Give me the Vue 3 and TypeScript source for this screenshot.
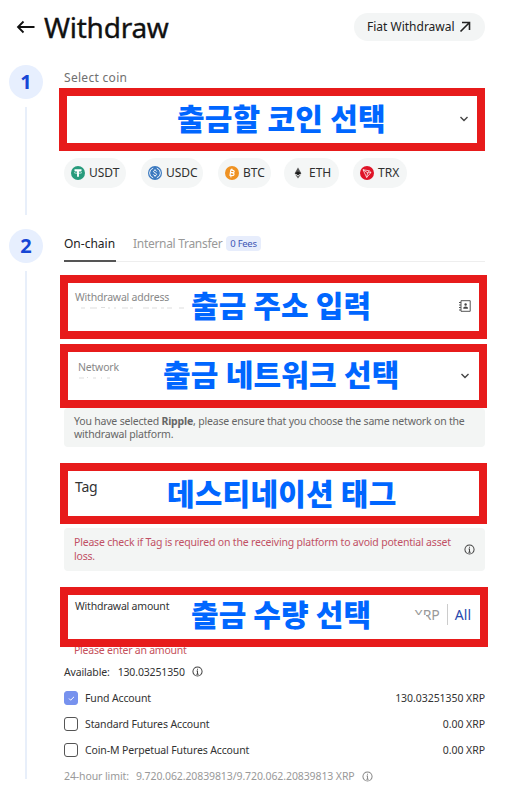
<script setup lang="ts">
interface Coin { id: string; gap: number; width: number }
interface Account { name: string; amount: string; checked: boolean; cls: string }

const coins: Coin[] = [
  { id: 'USDT', gap: 0, width: 62 },
  { id: 'USDC', gap: 15, width: 62 },
  { id: 'BTC', gap: 15, width: 53 },
  { id: 'ETH', gap: 13, width: 55 },
  { id: 'TRX', gap: 14, width: 54 },
]
const accounts: Account[] = [
  { name: 'Fund Account', amount: '130.03251350 XRP', checked: true, cls: 'fund' },
  { name: 'Standard Futures Account', amount: '0.00 XRP', checked: false, cls: 'standard' },
  { name: 'Coin-M Perpetual Futures Account', amount: '0.00 XRP', checked: false, cls: 'perpetual' },
]
</script>

<template>
  <main class="page">
    <header class="header">
      <svg class="back" viewBox="0 0 20 14" width="20" height="14"><path d="M18.500 7H2M7.500 1.500 2 7l5.500 5.500" /></svg>
      <h1>Withdraw</h1>
      <button class="fiat"><span>Fiat Withdrawal</span>
        <svg viewBox="0 0 12 12" width="12" height="12"><path d="M1.500 10.500 10 2M3 1.500h7.500V9" /></svg>
      </button>
    </header>

    <section class="step first">
      <div class="rail"><b>1</b><i></i></div>
      <div class="body">
        <div class="label">Select coin</div>
        <div class="box coin-box">
          <strong>출금할 코인 선택</strong>
          <svg class="chev" viewBox="0 0 8 6" width="8" height="6"><path d="m.5 1 3.500 3.500L7.500 1" /></svg>
        </div>
        <div class="coins">
          <div v-for="c in coins" :key="c.id" class="coin" :style="{ width: c.width + 'px', marginLeft: c.gap + 'px' }">
            <svg viewBox="0 0 14 14" width="14" height="14">
              <template v-if="c.id === 'USDT'"><circle cx="7" cy="7" r="7" fill="#279b7c" /><path d="M3.500 4.300h7M7 4.300v6.400" stroke="#fff" stroke-width="1.900" /><ellipse cx="7" cy="6.700" rx="3.800" ry=".9" fill="none" stroke="#fff" stroke-width=".5" /></template>
              <template v-else-if="c.id === 'USDC'"><circle cx="7" cy="7" r="7" fill="#3b79bf" /><path d="M5.200 2.200a5 5 0 0 0 0 9.600M8.800 2.200a5 5 0 0 1 0 9.600M8.600 5.500C8.300 4 5.400 4.200 5.500 5.700c.1 1.400 3.100 1 3.100 2.700 0 1.500-3 1.600-3.300 0M7 3.300v1M7 9.700v1" fill="none" stroke="#fff" stroke-width=".9" /></template>
              <template v-else-if="c.id === 'BTC'"><circle cx="7" cy="7" r="7" fill="#ef9223" /><path d="m5.900 3.700-1 6.200M5.300 4l2.500.4c2 .3 1.600 2.600-.3 2.300l-1.800-.2 1.900.3c2.200.4 1.800 3-.5 2.700l-2.600-.4M7 2.700l-.2 1.400M6 10l-.2 1.400" fill="none" stroke="#fff" stroke-width="1.200" /></template>
              <template v-else-if="c.id === 'ETH'"><path d="M7 1.500 3.700 7.200 7 9.100l3.300-1.900z" fill="#555" /><path d="m7 5.500-3.300 1.700L7 9.100l3.300-1.900z" fill="#1b1b1b" /><path d="M3.900 8.200 7 12.500l3.100-4.300L7 10z" fill="#666" /></template>
              <template v-else><circle cx="7" cy="7" r="7" fill="#df1428" /><path d="m3 3.700 6.200 1.100L11 6.500l-4.300 5zM3 3.700l4.600 3.200 1.600-2.100M7.600 6.900 11 6.500M7.600 6.900l-.9 4.600" fill="none" stroke="#fff" stroke-width=".7" /></template>
            </svg>
            <span>{{ c.id }}</span>
          </div>
        </div>
      </div>
    </section>

    <section class="step second">
      <div class="rail"><b>2</b><i></i></div>
      <div class="body">
        <nav class="tabs">
          <span class="tab active">On-chain</span>
          <span class="tab">Internal Transfer</span>
          <em>0 Fees</em>
        </nav>

        <div class="box address">
          <span class="caption">Withdrawal address</span>
          <svg class="trace" viewBox="0 0 108 2" width="108" height="2"><path d="M0 1h4M9 1h7M20 .500h4M27 1h2M33 1h2M41 1h6M49 1h3M62 1h6M71 1h5M80 1h3M86 1h5M98 1h5" /></svg>
          <strong>출금 주소 입력</strong>
          <svg class="book" viewBox="0 0 12 12" width="12" height="12"><path d="M2 .700h9.200v10.600H2zM0 2.500h2M0 5h2M0 7.500h2M0 10h2" fill="none" stroke="#555" /><circle cx="6.600" cy="4.500" r="1.200" fill="#444" /><path d="M4.300 8.700V7.500q2.300-1.800 4.600 0v1.200z" fill="#444" /></svg>
        </div>

        <div class="box network">
          <span class="caption">Network</span>
          <svg class="trace" viewBox="0 0 108 2" width="108" height="2"><path d="M0 1h5M8 .500h1M14 1h3M22 1h1M28 1h3" /></svg>
          <strong>출금 네트워크 선택</strong>
          <svg class="chev" viewBox="0 0 8 6" width="8" height="6"><path d="m.5 1 3.500 3.500L7.500 1" /></svg>
        </div>
        <div class="notice selected">
          <p>You have selected <b>Ripple</b>, please ensure that you choose the same network on the<br>withdrawal platform.</p>
        </div>

        <div class="box tag">
          <span class="caption">Tag</span>
          <strong>데스티네이션 태그</strong>
        </div>
        <div class="notice warning">
          <p>Please check if Tag is required on the receiving platform to avoid potential asset<br>loss.</p>
          <svg class="info" viewBox="0 0 12 12" width="11" height="11"><circle cx="6" cy="6" r="5" /><path d="M6 3v1M5 5.500h1V9M4.700 9h2.600" /></svg>
        </div>

        <div class="box amount">
          <span class="caption">Withdrawal amount</span>
          <strong>출금 수량 선택</strong>
          <div class="all"><span class="xrp">XRP</span><a>All</a></div>
        </div>
        <div class="error">Please enter an amount</div>
        <div class="available">
          <span>Available:</span><span class="balance">130.03251350</span>
          <svg class="info" viewBox="0 0 12 12" width="11" height="11"><circle cx="6" cy="6" r="5" /><path d="M6 3v1M5 5.500h1V9M4.700 9h2.600" /></svg>
        </div>
        <div v-for="a in accounts" :key="a.name" class="account" :class="a.cls">
          <i class="check" :class="{ on: a.checked }"><svg v-if="a.checked" viewBox="0 0 8 6" width="7" height="5"><path d="m1 3 2 2 4-4" /></svg></i>
          <span class="name">{{ a.name }}</span><span class="value">{{ a.amount }}</span>
        </div>
        <div class="limit">
          <span>24-hour limit:</span><span class="limits">9.720.062.20839813/9.720.062.20839813 XRP</span>
          <svg class="info" viewBox="0 0 12 12" width="11" height="11"><circle cx="6" cy="6" r="5" /><path d="M6 3v1M5 5.500h1V9M4.700 9h2.600" /></svg>
        </div>
      </div>
    </section>
  </main>
</template>

<style>
body { margin: 0; background: #fff; }
</style>
<style scoped>
* { box-sizing: border-box; }
.page { width: 507px; height: 789px; overflow: hidden; background: #fff; color: #333; font: 10.500px/14px "Noto Sans", "Noto Sans CJK KR", sans-serif; white-space: nowrap; }
svg path { stroke-linecap: butt; }
.header { height: 65px; display: flex; align-items: flex-start; padding: 0 22px 0 16px; }
.back { margin-top: 20px; fill: none; stroke: #111; stroke-width: 1.800; }
h1 { margin: 8px 0 0 8px; font-size: 28px; line-height: 39px; font-weight: 400; color: #111; letter-spacing: -.25px; -webkit-text-stroke: .35px #111; }
.fiat { margin: 13px 0 0 auto; width: 131px; height: 28px; border: 0; border-radius: 14px; background: #f3f5f5; padding: 0 0 0 13px; display: flex; align-items: center; gap: 4px; font: 400 12px/16px "Noto Sans", sans-serif; letter-spacing: 0; color: #222; white-space: nowrap; }
.fiat svg { fill: none; stroke: #222; stroke-width: 1.600; flex: none; }
.step { display: grid; grid-template-columns: 64px 443px; }
.first { height: 164px; }
.second { height: 560px; }
.rail { display: flex; flex-direction: column; align-items: center; width: 34px; margin-left: 9px; }
.rail b { width: 34px; height: 34px; border-radius: 50%; background: #e7effe; color: #1646d5; font-size: 20px; line-height: 34px; text-align: center; }
.rail i { width: 2px; background: #e8effa; margin-top: 8px; height: 108px; }
.second .rail i { height: 508px; }
.body { width: 421px; }
.label { height: 23px; padding-top: 4px; font-size: 12px; letter-spacing: .3px; line-height: 17px; color: #707070; }
.box { position: relative; z-index: 1; border: 8px solid #e71b1b; background: #fff; display: flex; margin-left: -4px; width: 427px; }
.box strong { position: absolute; font: 900 30px/44px "Noto Sans CJK KR", sans-serif; color: #06f; letter-spacing: .1px; }
.coin-box { margin-left: -5px; width: 426px; height: 63px; }
.coin-box strong { left: 110px; top: -1px; letter-spacing: .2px; }
.chev { fill: none; stroke: #444; stroke-width: 1.400; margin: 20px 9px 0 auto; align-self: flex-start; }
.coins { display: flex; margin-top: 7px; }
.coin { height: 30px; border-radius: 15px; background: #f4f6f6; display: flex; align-items: center; gap: 4px; padding-left: 7px; font-size: 12px; color: #303030; flex: none; }
.coin svg { flex: none; }
.tabs { height: 33px; width: 421px; display: flex; align-items: flex-start; border-bottom: 1px solid #eee; font-size: 12px; color: #999; }
.tab { height: 33px; line-height: 29px; margin-right: 17px; letter-spacing: -.3px; }
.tab.active { width: 52px; color: #222; border-bottom: 2px solid #555; letter-spacing: 0; }
.tab + .tab { margin-right: 4px; }
.tabs em { margin-top: 7px; height: 15px; padding: 0 4px; border-radius: 4px; background: #e7edfc; color: #4056b5; font-style: normal; font-size: 9.500px; letter-spacing: -.3px; line-height: 15px; }
.caption { position: absolute; left: 7px; top: 7px; color: #888; letter-spacing: -.2px; }
.trace { position: absolute; left: 13px; top: 24px; stroke: #ddd; stroke-width: 1; }
.address { margin-top: 13px; height: 64px; }
.address strong { left: 123px; top: -1px; }
.book { margin: 17px 8px 0 auto; }
.network { margin-top: 5px; height: 64px; }
.network .caption { left: 10px; top: 8px; }
.network .trace { left: 11px; top: 25px; }
.network strong { left: 95px; top: -1px; letter-spacing: .2px; }
.network .chev { margin: 21px 10px 0 auto; }
.notice { background: #f3f5f4; border-radius: 4px; width: 421px; padding: 0 10px; display: flex; justify-content: space-between; align-items: center; color: #666; letter-spacing: -.19px; }
.notice p { margin: 0; line-height: 13.500px; }
.selected { height: 39px; padding-top: 1px; }
.tag { margin-top: 16px; height: 61px; }
.tag .caption { font-size: 14px; line-height: 20px; top: 6px; color: #333; letter-spacing: -.2px; }
.tag strong { left: 99px; top: -1px; letter-spacing: .2px; }
.warning { margin-top: 4px; height: 43px; color: #c15165; }
.info { fill: none; stroke: #444; stroke-width: 1.100; flex: none; }
.amount { width: 428px; height: 60px; margin-top: 16px; }
.amount .caption { color: #333; top: 4px; }
.amount strong { left: 123px; top: -4px; }
.all { display: flex; margin: 9px 9px 0 auto; height: 21px; font-size: 14px; line-height: 21px; color: #999; }
.xrp { position: relative; padding-right: 7px; border-right: 1px solid #ccc; }
.xrp::after { content: ""; position: absolute; left: 0; top: 11px; width: 12px; height: 8px; background: #fff; }
.all a { padding-left: 7px; color: #2849ad; }
.error { height: 15px; margin: -4px 0 0 10px; color: #c5515b; letter-spacing: -.23px; }
.available { height: 27px; display: flex; align-items: center; letter-spacing: -.15px; }
.balance { margin: 0 7px 0 8px; }
.account { height: 26px; display: flex; align-items: center; }
.check { width: 14px; height: 14px; border: 1.300px solid #555; border-radius: 3px; margin-right: 7px; display: grid; place-items: center; }
.check.on { background: #7792ee; border-color: #7792ee; }
.check svg { fill: none; stroke: #fff; stroke-width: 1.200; }
.name { letter-spacing: -.13px; }
.value { margin-left: auto; letter-spacing: -.05px; }
.limit { height: 26px; display: flex; align-items: center; color: #999; letter-spacing: -.1px; }
.limits { margin: 0 7px 0 7px; }
.limit .info { stroke: #888; }
</style>
